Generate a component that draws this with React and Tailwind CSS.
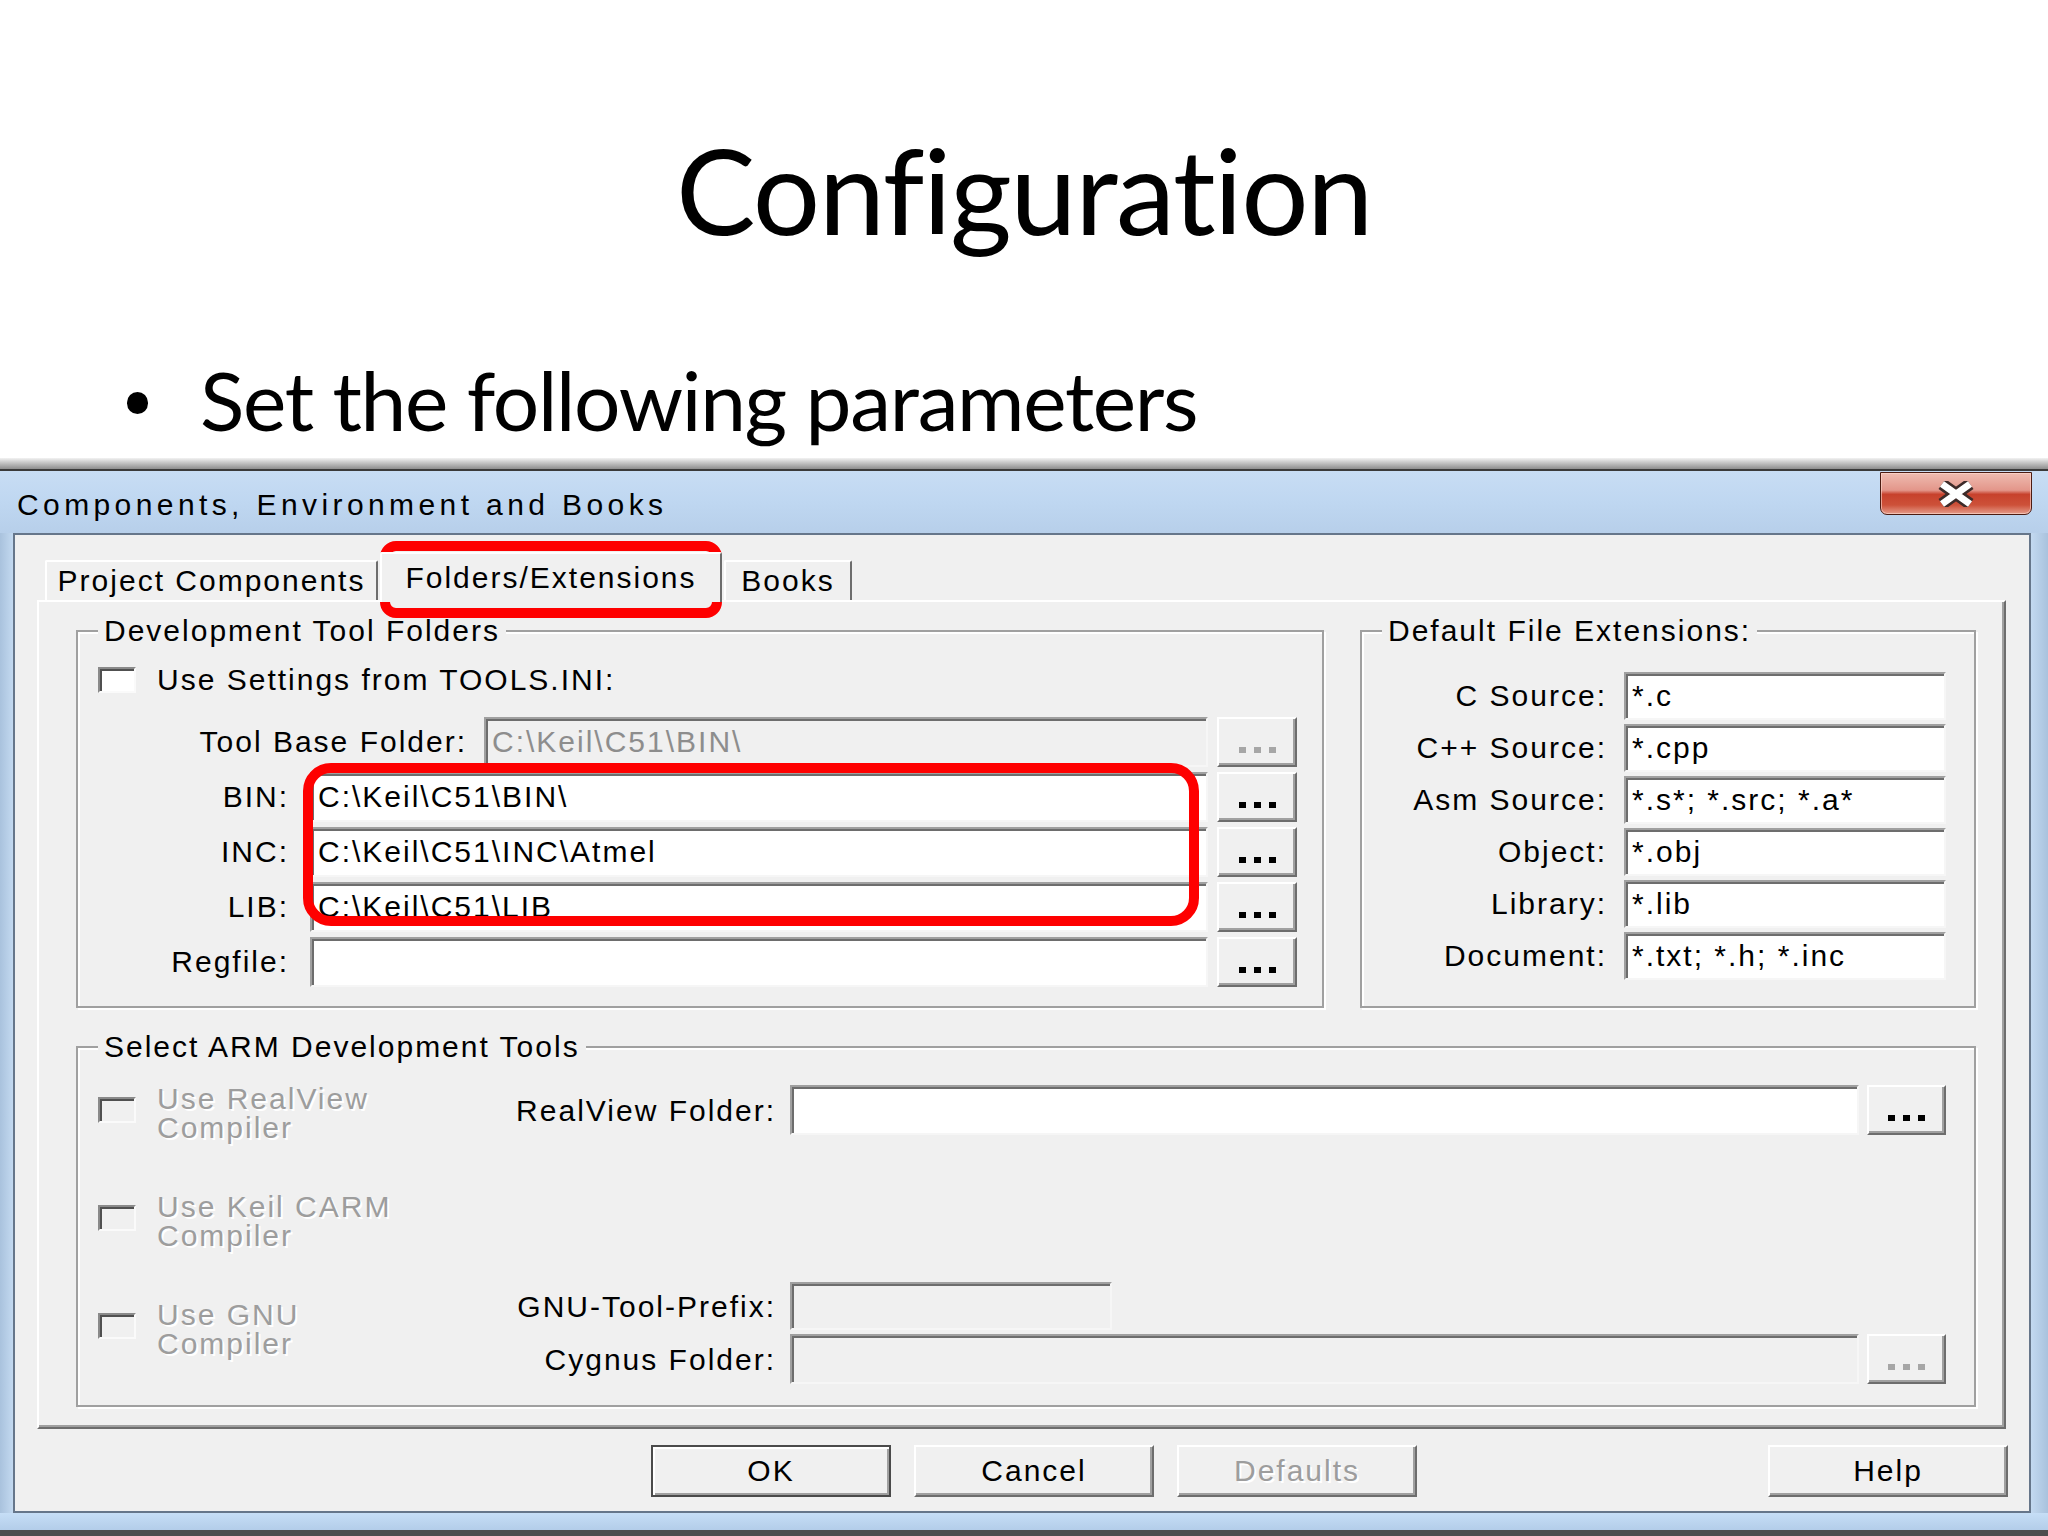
const SUNKEN =
  "border-2 border-t-[#a0a0a0] border-l-[#a0a0a0] border-r-[#f6f6f6] border-b-[#f6f6f6] shadow-[inset_2px_2px_0_#6d6d6d]";
const RAISED =
  "border-2 border-t-white border-l-white border-r-[#6d6d6d] border-b-[#6d6d6d] shadow-[inset_-2px_-2px_0_#a0a0a0]";
const GRAYTXT = "text-[#9d9d9d] [text-shadow:2px_2px_0_#ffffff]";

function Field({ value = "", disabled = false, className = "" }) {
  return (
    <div
      className={`${SUNKEN} ${
        disabled ? "bg-[#f0f0f0] text-[#8d8d8d]" : "bg-white text-black"
      } flex items-center pl-[6px] leading-[34px] whitespace-nowrap overflow-hidden ${className}`}
    >
      {value}
    </div>
  );
}

function Browse({ disabled = false, className = "" }) {
  const dot = disabled ? "bg-[#a6a6a6]" : "bg-black";
  return (
    <div
      className={`${RAISED} bg-[#f0f0f0] shrink-0 flex items-end justify-center gap-[8px] pb-[12px] ${className}`}
    >
      <span className={`w-[7px] h-[6px] ${dot}`} />
      <span className={`w-[7px] h-[6px] ${dot}`} />
      <span className={`w-[7px] h-[6px] ${dot}`} />
    </div>
  );
}

function Check({ disabled = false, className = "" }) {
  return (
    <div
      className={`w-[38px] h-[26px] shrink-0 border-2 border-t-[#8a8a8a] border-l-[#8a8a8a] border-r-[#fafafa] border-b-[#fafafa] shadow-[inset_2px_2px_0_#505050] ${
        disabled ? "bg-[#f0f0f0]" : "bg-white"
      } ${className}`}
    />
  );
}

function Group({ title, className = "", children }) {
  return (
    <fieldset
      className={`border-2 border-[#a0a0a0] shadow-[inset_2px_2px_0_#ffffff,2px_2px_0_#ffffff] shrink-0 ${className}`}
    >
      <legend className="ml-[20px] px-[6px] leading-[34px] bg-[#f0f0f0] whitespace-nowrap">
        {title}
      </legend>
      {children}
    </fieldset>
  );
}

function PathRow({ label, lw, value, disabled = false }) {
  return (
    <div className="flex h-[50px] items-stretch">
      <div
        className={`${lw} shrink-0 flex items-center justify-end leading-[34px] whitespace-nowrap`}
      >
        {label}
      </div>
      <Field value={value} disabled={disabled} className="flex-1" />
      <Browse disabled={disabled} className="ml-[9px] w-[80px]" />
    </div>
  );
}

function ExtRow({ label, value }) {
  return (
    <div className="flex h-[48px] items-stretch">
      <div className="w-[262px] pr-[17px] shrink-0 flex items-center justify-end leading-[34px] whitespace-nowrap">
        {label}
      </div>
      <Field value={value} className="w-[322px]" />
    </div>
  );
}

function ArmCheck({ l1 }) {
  return (
    <div className="flex items-start pl-[20px]">
      <Check disabled className="mt-[13px]" />
      <div className={`ml-[21px] leading-[29px] ${GRAYTXT} whitespace-nowrap`}>
        <div>{l1}</div>
        <div>Compiler</div>
      </div>
    </div>
  );
}

function DlgButton({ children, isDefault = false, disabled = false, className = "" }) {
  return (
    <div
      className={`w-[240px] h-[52px] shrink-0 bg-[#f0f0f0] flex items-center justify-center leading-[34px] ${
        isDefault
          ? "border-2 border-[#4a4a4a] shadow-[inset_2px_2px_0_#ffffff,inset_-2px_-2px_0_#a0a0a0]"
          : RAISED
      } ${disabled ? GRAYTXT : "text-black"} ${className}`}
    >
      {children}
    </div>
  );
}

export default function App() {
  return (
    <div className="relative w-[2048px] h-[1536px] overflow-hidden bg-white">
      {/* Slide text */}
      <div className="h-[458px] font-['Lato',sans-serif] text-black [font-variant-ligatures:none]">
        <div className="pt-[130px] text-center text-[119px] leading-none tracking-[-1.5px]">
          Configuration
        </div>
        <div className="mt-[109px] flex items-start pl-[127px] text-[82px] leading-none">
          <span className="mt-[34px] w-[21px] h-[22px] rounded-full bg-black shrink-0" />
          <span className="ml-[52px] tracking-[-1.3px]">Set the following parameters</span>
        </div>
      </div>

      {/* Dialog window */}
      <div className="flex flex-col h-[1078px] font-['Liberation_Sans',Arial,sans-serif] text-[30px] tracking-[2px] text-black">
        <div className="h-[11px] bg-linear-to-b from-[#f2f2f2] to-[#8e8e8e]" />
        <div className="h-[2px] bg-[#3a3a3a]" />
        {/* title bar */}
        <div className="h-[62px] flex items-start bg-linear-to-b from-[#c8ddf4] via-[#bfd7f1] to-[#b7cfea]">
          <div className="pl-[17px] pt-[19px] text-[30px] leading-none tracking-[4.4px] whitespace-nowrap">
            Components, Environment and Books
          </div>
          <div className="ml-auto mr-[16px] mt-[1px] w-[152px] h-[43px] rounded-b-[7px] border border-[#4c1c12] bg-[linear-gradient(180deg,#efbcb1_0%,#e3968a_42%,#c7412c_52%,#cd5139_78%,#e59c8b_100%)] shadow-[inset_0_0_0_1px_rgba(255,220,210,0.6)] flex items-center justify-center">
            <svg width="44" height="26" viewBox="0 0 44 26">
              <path d="M8 3 L36 23 M36 3 L8 23" stroke="#3d2b29" strokeWidth="12" />
              <path d="M8 3 L36 23 M36 3 L8 23" stroke="#ffffff" strokeWidth="7" />
            </svg>
          </div>
        </div>
        {/* middle */}
        <div className="h-[980px] flex">
          <div className="w-[13px] bg-linear-to-r from-[#a9c2dd] to-[#c3d9f0]" />
          <div className="w-[2018px] h-full border-2 border-[#66768a] bg-[#f0f0f0] flex flex-col">
            {/* tabs */}
            <div className="h-[65px] flex items-end pl-[30px] shrink-0">
              <div className="w-[333px] h-[40px] border-t-2 border-l-2 border-r-2 border-t-white border-l-white border-r-[#6d6d6d] rounded-t-[2px] flex items-center justify-center leading-[34px] whitespace-nowrap">
                Project Components
              </div>
              <div className="ml-[2px] relative z-10 -mb-[2px] w-[342px] h-[50px] bg-[#f0f0f0] border-t-2 border-l-2 border-r-2 border-t-white border-l-white border-r-[#6d6d6d] rounded-t-[2px] flex items-center justify-center leading-[34px] whitespace-nowrap">
                Folders/Extensions
              </div>
              <div className="ml-[2px] w-[128px] h-[40px] border-t-2 border-l-2 border-r-2 border-t-white border-l-white border-r-[#6d6d6d] rounded-t-[2px] flex items-center justify-center leading-[34px] whitespace-nowrap">
                Books
              </div>
            </div>
            {/* panel */}
            <div
              className={`ml-[22px] w-[1969px] h-[829px] shrink-0 ${RAISED} pt-[12px] pl-[37px] pr-[28px] flex flex-col gap-[22px]`}
            >
              <div className="flex gap-[36px]">
                <Group title="Development Tool Folders" className="w-[1248px] h-[394px]">
                  <div className="flex flex-col">
                    <div className="mt-[15px] h-[34px] flex items-center pl-[20px]">
                      <Check />
                      <span className="ml-[21px] leading-[34px] whitespace-nowrap">
                        Use Settings from TOOLS.INI:
                      </span>
                    </div>
                    <div className="mt-[20px] flex flex-col gap-[5px] pr-[25px]">
                      <PathRow
                        label="Tool Base Folder:"
                        lw="w-[406px] pr-[17px]"
                        value={"C:\\Keil\\C51\\BIN\\"}
                        disabled
                      />
                      <PathRow label="BIN:" lw="w-[232px] pr-[21px]" value={"C:\\Keil\\C51\\BIN\\"} />
                      <PathRow
                        label="INC:"
                        lw="w-[232px] pr-[21px]"
                        value={"C:\\Keil\\C51\\INC\\Atmel"}
                      />
                      <PathRow label="LIB:" lw="w-[232px] pr-[21px]" value={"C:\\Keil\\C51\\LIB"} />
                      <PathRow label="Regfile:" lw="w-[232px] pr-[21px]" value="" />
                    </div>
                  </div>
                </Group>
                <Group title="Default File Extensions:" className="w-[616px] h-[394px]">
                  <div className="mt-[24px] flex flex-col gap-[4px]">
                    <ExtRow label="C Source:" value="*.c" />
                    <ExtRow label="C++ Source:" value="*.cpp" />
                    <ExtRow label="Asm Source:" value="*.s*; *.src; *.a*" />
                    <ExtRow label="Object:" value="*.obj" />
                    <ExtRow label="Library:" value="*.lib" />
                    <ExtRow label="Document:" value="*.txt; *.h; *.inc" />
                  </div>
                </Group>
              </div>
              <Group title="Select ARM Development Tools" className="w-[1900px] h-[377px]">
                <div className="flex">
                  <div className="w-[322px] shrink-0 mt-[20px] flex flex-col gap-[50px]">
                    <ArmCheck l1="Use RealView" />
                    <ArmCheck l1="Use Keil CARM" />
                    <ArmCheck l1="Use GNU" />
                  </div>
                  <div className="flex-1 flex flex-col pr-[28px]">
                    <div className="mt-[21px] h-[50px] flex items-stretch">
                      <div className="w-[390px] pr-[14px] shrink-0 flex items-center justify-end whitespace-nowrap">
                        RealView Folder:
                      </div>
                      <Field className="flex-1" />
                      <Browse className="ml-[8px] w-[79px]" />
                    </div>
                    <div className="mt-[147px] h-[48px] flex items-stretch">
                      <div className="w-[390px] pr-[14px] shrink-0 flex items-center justify-end whitespace-nowrap">
                        GNU-Tool-Prefix:
                      </div>
                      <Field disabled className="w-[322px]" />
                    </div>
                    <div className="mt-[4px] h-[50px] flex items-stretch">
                      <div className="w-[390px] pr-[14px] shrink-0 flex items-center justify-end whitespace-nowrap">
                        Cygnus Folder:
                      </div>
                      <Field disabled className="flex-1" />
                      <Browse disabled className="ml-[8px] w-[79px]" />
                    </div>
                  </div>
                </div>
              </Group>
            </div>
            {/* buttons */}
            <div className="mt-[16px] flex pl-[636px] pr-[21px]">
              <DlgButton isDefault>OK</DlgButton>
              <DlgButton className="ml-[23px]">Cancel</DlgButton>
              <DlgButton disabled className="ml-[23px]">
                Defaults
              </DlgButton>
              <DlgButton className="ml-auto">Help</DlgButton>
            </div>
          </div>
          <div className="flex-1 bg-linear-to-r from-[#c3d9f0] to-[#a9c2dd]" />
        </div>
        <div className="h-[17px] bg-linear-to-b from-[#c6def6] to-[#b3cde9]" />
        <div className="flex-1 bg-[#4d4d4d]" />
      </div>

      {/* red highlights */}
      <div className="absolute left-[380px] top-[541px] w-[342px] h-[77px] border-[10px] border-[#fe0000] rounded-[16px] pointer-events-none" />
      <div className="absolute left-[303px] top-[763px] w-[896px] h-[163px] border-[10px] border-[#fe0000] rounded-[28px] pointer-events-none" />
    </div>
  );
}
